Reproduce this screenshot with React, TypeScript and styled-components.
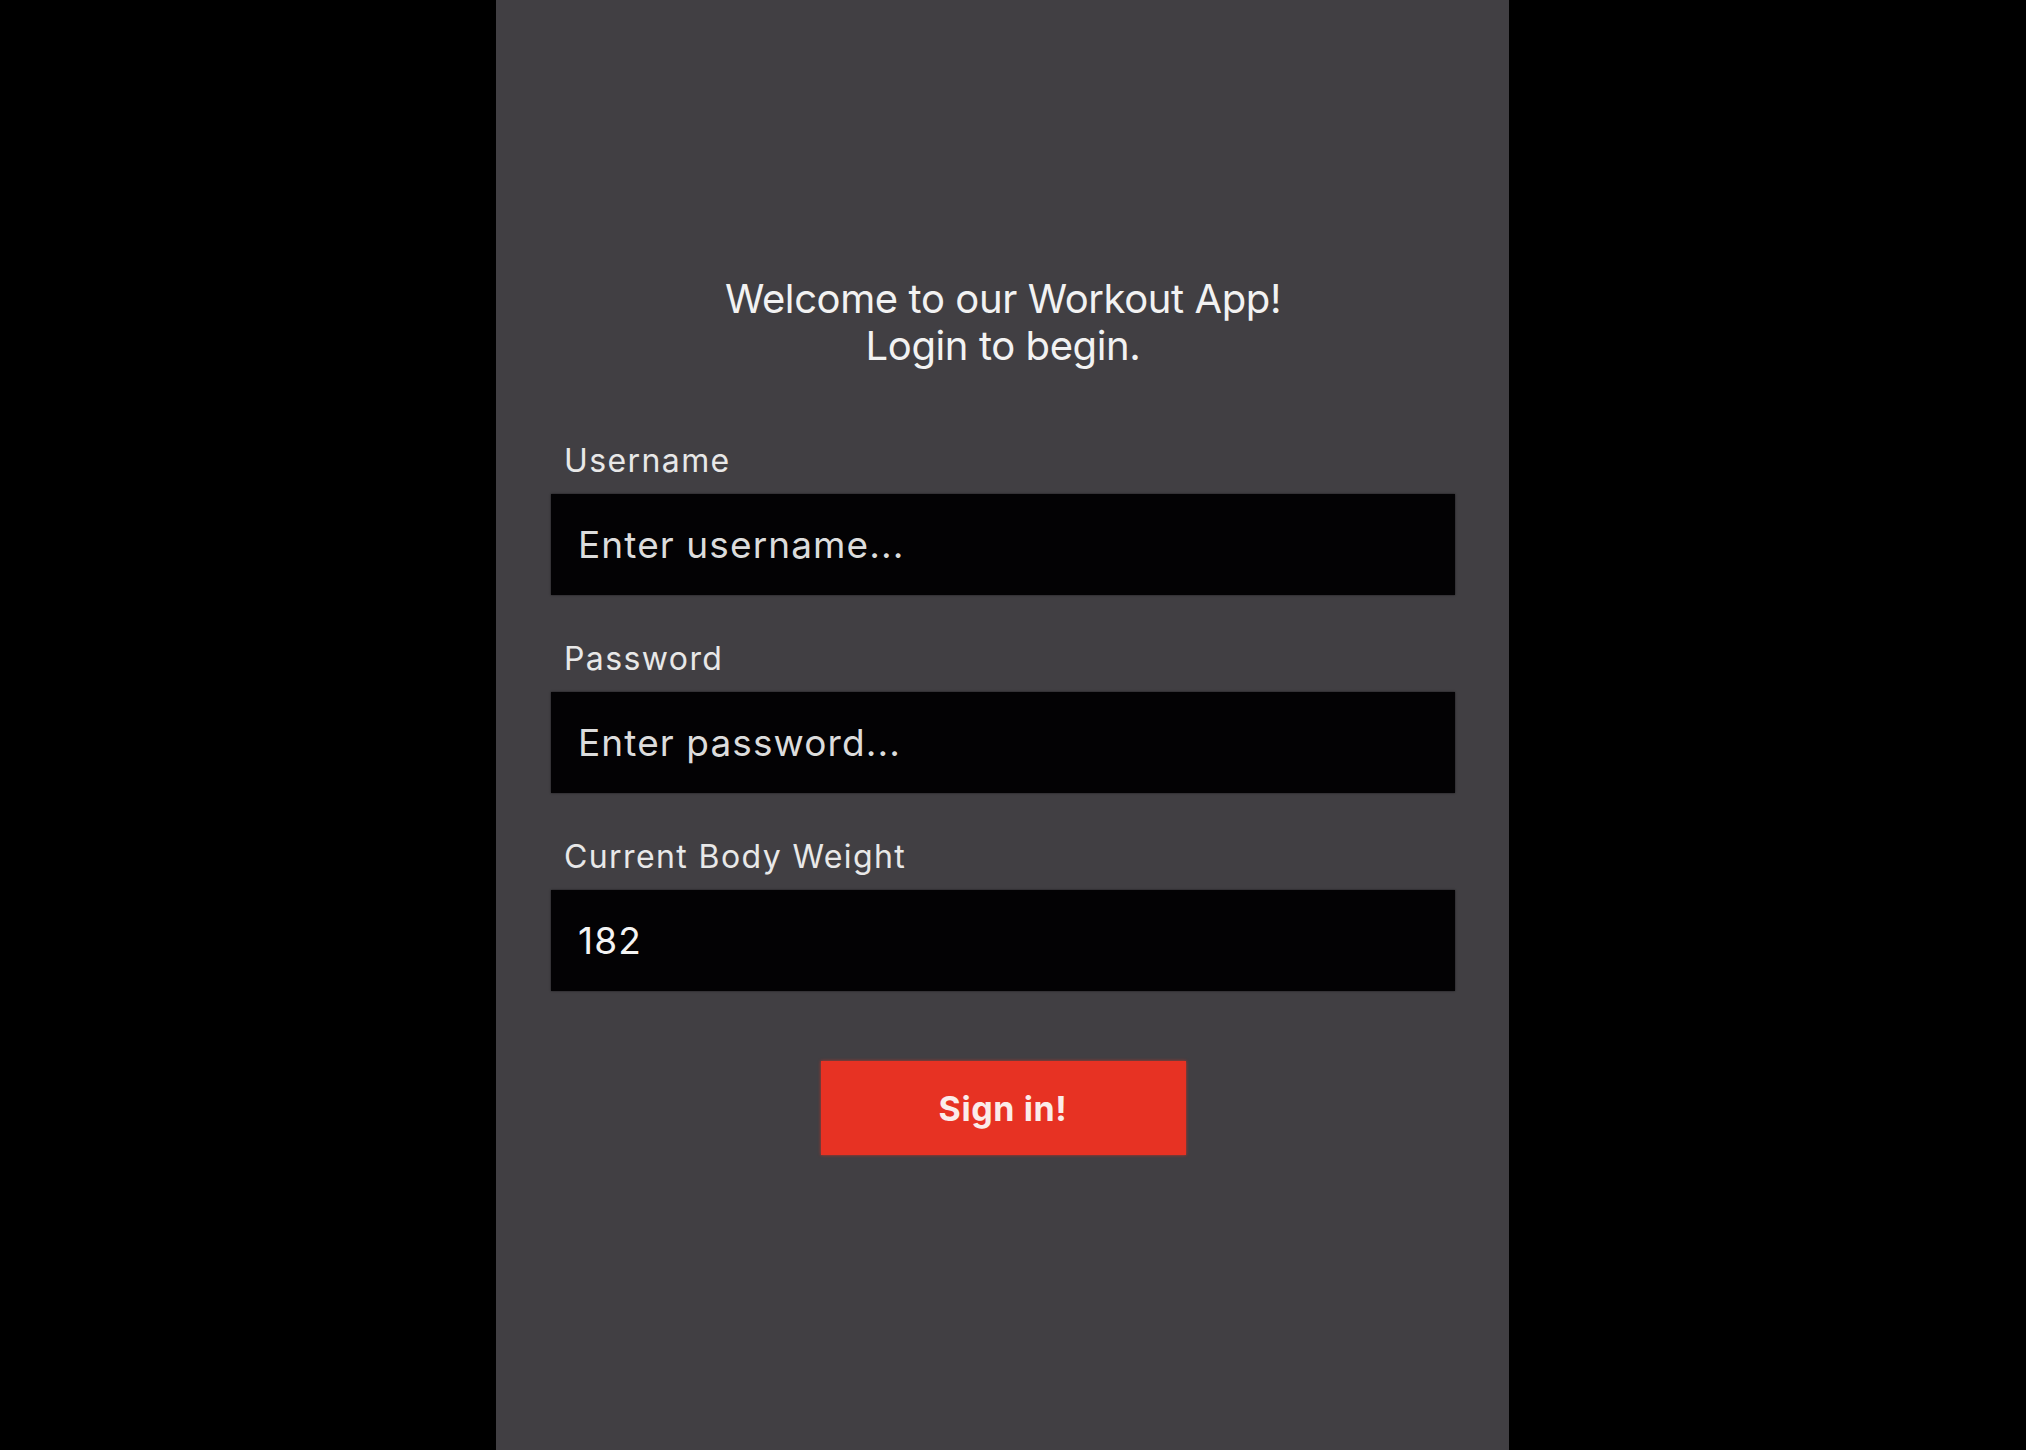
import React from "react";
import styled, { createGlobalStyle } from "styled-components";

const GlobalStyle = createGlobalStyle`
  html, body {
    margin: 0;
    padding: 0;
    background: #000000;
  }
  body {
    font-family: Inter, "Noto Sans", "Liberation Sans", sans-serif;
  }
  * { box-sizing: border-box; }
`;

const Stage = styled.div`
  display: flex;
  min-height: 1450px;
  padding-left: 496px;
  background: #000000;
`;

const Phone = styled.main`
  width: 1013px;
  min-height: 1450px;
  background: #413f43;
  display: flex;
  flex-direction: column;
  padding: 275px 54px 0 55px;
`;

const Title = styled.h1`
  margin: 0;
  font-size: 40px;
  line-height: 47px;
  font-weight: 400;
  color: #f2f2f2;
  text-align: center;
  letter-spacing: -0.4px;
`;

const Form = styled.form`
  display: flex;
  flex-direction: column;
  margin-top: 74px;
`;

const Field = styled.div<{ $first?: boolean }>`
  display: flex;
  flex-direction: column;
  margin-top: ${(p) => (p.$first ? "0" : "46px")};
`;

const Label = styled.label`
  font-size: 32px;
  line-height: 36px;
  letter-spacing: 1.4px;
  color: #e8e8e8;
  padding-left: 13px;
  margin-bottom: 15px;
`;

const Input = styled.input`
  height: 101px;
  width: 100%;
  border: none;
  outline: none;
  background: #030204;
  color: #f4f4f4;
  font-family: Inter, "Noto Sans", "Liberation Sans", sans-serif;
  font-size: 37px;
  letter-spacing: 1.1px;
  padding: 0 27px;
  box-shadow: 0 0 2px rgba(0, 0, 0, 0.6);
  &::placeholder {
    color: #dcdcdc;
    opacity: 1;
  }
`;

const ButtonRow = styled.div`
  display: flex;
  justify-content: center;
  margin-top: 70px;
`;

const SignIn = styled.button`
  width: 365px;
  height: 94px;
  border: none;
  background: #e73223;
  color: #fbecea;
  font-family: Inter, "Noto Sans", "Liberation Sans", sans-serif;
  font-size: 34px;
  font-weight: 700;
  letter-spacing: 0.6px;
  box-shadow: 0 0 3px rgba(231, 50, 35, 0.8);
  cursor: pointer;
`;

export default function App() {
  return (
    <>
      <GlobalStyle />
      <Stage>
        <Phone>
          <Title>
            Welcome to our Workout App!
            <br />
            Login to begin.
          </Title>
          <Form onSubmit={(e) => e.preventDefault()}>
            <Field $first>
              <Label htmlFor="username">Username</Label>
              <Input id="username" placeholder="Enter username..." />
            </Field>
            <Field>
              <Label htmlFor="password">Password</Label>
              <Input id="password" placeholder="Enter password..." />
            </Field>
            <Field>
              <Label htmlFor="weight">Current Body Weight</Label>
              <Input id="weight" defaultValue="182" />
            </Field>
            <ButtonRow>
              <SignIn type="submit">Sign in!</SignIn>
            </ButtonRow>
          </Form>
        </Phone>
      </Stage>
    </>
  );
}
